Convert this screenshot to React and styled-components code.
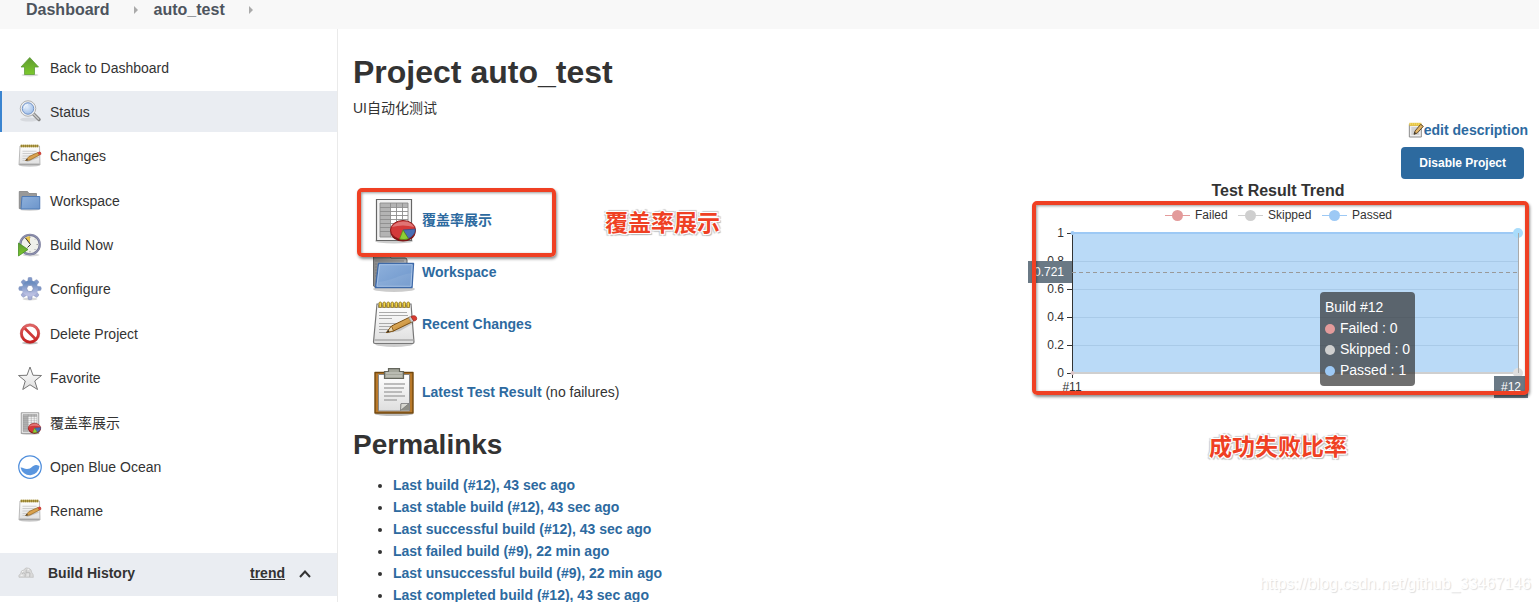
import React from 'react';
import styled, { createGlobalStyle } from 'styled-components';

const GlobalStyle = createGlobalStyle`
* {
  box-sizing: border-box;
}
body {
  margin: 0;
  background-color: #fff;
  color: #333;
  font-family: "Liberation Sans", "Noto Sans CJK SC", sans-serif;
  font-size: 14px;
  line-height: 22px;
}
ul, h1, h2, p {
  margin: 0;
  padding: 0;
}
svg {
  display: block;
  flex: none;
}
`;

const Page = styled.div`
position: relative;
display: flex;
flex-direction: column;
height: 100vh;
overflow: hidden;
`;

const Breadcrumbs = styled.nav`
display: flex;
align-items: center;
gap: 16px;
padding: 0 26px 10px;
background-color: #f8f8f8;
`;

const Crumb = styled.a`
color: #4d545d;
font-size: 16px;
font-weight: 700;
line-height: 19px;
text-decoration: none;
`;

const CrumbArrow = styled.span`
width: 4px;
margin-left: 8px;
border: 4px solid transparent;
border-left-color: #aaa;
border-right: none;
`;

const Body = styled.div`
display: flex;
flex: 1;
min-height: 0;
`;

const Sidebar = styled.aside`
display: flex;
flex: none;
flex-direction: column;
gap: 21px;
width: 338px;
padding-top: 18px;
border-right: 1px solid #eaeaea;
`;

const TaskList = styled.ul`
display: flex;
flex-direction: column;
justify-content: space-between;
height: 485px;
list-style: none;
`;

const Task = styled.a`
display: flex;
align-items: center;
gap: 8px;
height: 41px;
padding-left: ${(p) => (p.$active ? 16 : 18)}px;
border-left: ${(p) => (p.$active ? '2px solid #3a84d0' : 'none')};
background-color: ${(p) => (p.$active ? '#eaedf2' : 'transparent')};
color: #333;
text-decoration: none;
`;

const HistoryBar = styled.div`
display: flex;
align-items: center;
gap: 14px;
height: 43px;
padding: 0 26px 4px 18px;
background-color: #eaedf2;
font-weight: 700;
`;

const HistoryTitle = styled.span`
flex: 1;
`;

const TrendLink = styled.a`
color: #333;
`;

const Toggle = styled.button`
padding: 0;
border: none;
background: none;
color: #333;
cursor: pointer;
`;

const Main = styled.main`
flex: 1;
min-width: 0;
padding: 25px 11px 0 15px;
`;

const Title = styled.h1`
font-size: 32px;
line-height: 36px;
`;

const Description = styled.p`
margin-top: 7px;
`;

const Actions = styled.div`
display: flex;
flex-direction: column;
align-items: flex-end;
gap: 6px;
`;

const EditLink = styled.a`
display: flex;
align-items: center;
color: #2d6a9f;
font-weight: 700;
text-decoration: none;
`;

const DisableButton = styled.button`
height: 32px;
margin-right: 4px;
padding: 0 18px;
border: none;
border-radius: 4px;
background-color: #2d6a9f;
color: #fff;
font-family: inherit;
font-size: 12px;
font-weight: 700;
cursor: pointer;
`;

const Columns = styled.div`
display: flex;
justify-content: space-between;
`;

const Shortcuts = styled.div`
display: flex;
flex-direction: column;
gap: 4px;
padding: 17px 0 0 17px;
`;

const Shortcut = styled.div`
position: relative;
display: flex;
align-items: center;
gap: 4px;
margin-top: ${(p) => (p.$spaced ? 16 : 0)}px;
`;

const Link = styled.a`
color: #2d6a9f;
font-weight: 700;
text-decoration: none;
`;

const Heading = styled.h2`
margin-top: 12px;
font-size: 28px;
line-height: 34px;
`;

const Permalinks = styled.ul`
margin-top: 12px;
padding-left: 40px;
`;

// red marker drawn above the content
const Marker = styled.span`
position: absolute;
top: -8px;
left: -13px;
z-index: 2;
width: 199px;
height: 69px;
border: 4px solid #ef4023;
border-radius: 5px;
box-shadow: 1px 2px 3px rgba(0, 0, 0, .45), inset 1px 1px 3px rgba(0, 0, 0, .4);
pointer-events: none;
`;

const ChartMarker = styled(Marker)`
top: 1px;
left: 4px;
width: 497px;
height: 194px;
`;

const Note = styled.strong`
color: #ef4023;
font-size: 23px;
line-height: 30px;
text-shadow: 0 0 1px #fff, 1px 1px 0 #fff, -1px -1px 0 #fff, 1px -1px 0 #fff, -1px 1px 0 #fff,
  2px 2px 1px #bbb, -2px -1px 1px #ccc, 2px -2px 1px #ccc, -2px 2px 1px #ccc;
`;

const SideNote = styled(Note)`
position: absolute;
top: 12px;
left: 235px;
white-space: nowrap;
`;

const Trend = styled.section`
display: flex;
flex: none;
flex-direction: column;
align-items: center;
width: 500px;
padding-top: 3px;
`;

const TrendTitle = styled.div`
font-size: 16px;
font-weight: 700;
line-height: 18px;
`;

const ChartBox = styled.div`
position: relative;
width: 500px;
height: 200px;
margin-bottom: 32px;
`;

const Tooltip = styled.div`
position: absolute;
top: 92px;
left: 292px;
padding: 5px;
border-radius: 4px;
background-color: rgba(50, 50, 50, .7);
color: #fff;
line-height: 21px;
white-space: nowrap;
`;

const TooltipRow = styled.div`
display: flex;
align-items: center;
gap: 5px;
`;

const Dot = styled.span`
width: 10px;
height: 10px;
border-radius: 50%;
background-color: ${(p) => p.$color};
`;

const Watermark = styled.span`
position: absolute;
right: 8px;
bottom: 8px;
color: #fff;
font-size: 16px;
line-height: 20px;
text-shadow: 1px 1px 1px #ddd;
`;

const HiddenSvg = styled.svg`
position: absolute;
`;

const Svg = ({ size = 24, children }) => (
  <svg width={size} height={size} viewBox="0 0 48 48" fill="none" aria-hidden="true">
    {children}
  </svg>
);

const Gradients = () => (
  <HiddenSvg width="0" height="0" aria-hidden="true">
    <defs>
      <linearGradient id="paper" x1="0" y1="0" x2="0" y2="1">
        <stop offset="0" stopColor="#fff" />
        <stop offset="1" stopColor="#dedede" />
      </linearGradient>
      <linearGradient id="green" x1="0" y1="0" x2="0" y2="1">
        <stop offset="0" stopColor="#5f9a31" />
        <stop offset="1" stopColor="#7cc92c" />
      </linearGradient>
      <linearGradient id="blue" x1="0" y1="0" x2="1" y2="1">
        <stop offset="0" stopColor="#8fb1dc" />
        <stop offset="1" stopColor="#6c95cb" />
      </linearGradient>
      <linearGradient id="gearFill" x1="0" y1="0" x2="0" y2="1">
        <stop offset="0" stopColor="#6b8cbf" />
        <stop offset="1" stopColor="#b9bfe2" />
      </linearGradient>
      <linearGradient id="redFill" x1="0" y1="0" x2="0" y2="1">
        <stop offset="0" stopColor="#e06666" />
        <stop offset="1" stopColor="#c62020" />
      </linearGradient>
      <linearGradient id="metal" x1="0" y1="0" x2="1" y2="0">
        <stop offset="0" stopColor="#8a8a8a" />
        <stop offset="1" stopColor="#b5b5b5" />
      </linearGradient>
      <linearGradient id="wood" x1="0" y1="0" x2="1" y2="1">
        <stop offset="0" stopColor="#f0c67a" />
        <stop offset="1" stopColor="#b97a22" />
      </linearGradient>
      <radialGradient id="lens" cx=".4" cy=".35" r=".7">
        <stop offset="0" stopColor="#e4eefb" />
        <stop offset="1" stopColor="#9dbde8" />
      </radialGradient>
    </defs>
  </HiddenSvg>
);

const UpIcon = ({ size }) => (
  <Svg size={size}>
    <ellipse cx="24" cy="38" rx="17" ry="3" fill="#000" opacity=".15" />
    <path d="M23.5 3 41 22H33V37H13V22H6Z" fill="url(#green)" stroke="#5b9a35" strokeWidth="1.5" />
  </Svg>
);

const SearchIcon = ({ size }) => (
  <Svg size={size}>
    <ellipse cx="22" cy="39" rx="18" ry="4" fill="#000" opacity=".08" />
    <path d="M31 28 42 39" stroke="#858585" strokeWidth="7" strokeLinecap="round" />
    <path d="M31 28 41 38" stroke="#c9c9c9" strokeWidth="3" strokeLinecap="round" />
    <circle cx="20" cy="17" r="15.500" fill="#f3f3f3" stroke="#b0b0b0" strokeWidth="2" />
    <circle cx="20" cy="17" r="11.500" fill="url(#lens)" stroke="#7193c8" strokeWidth="2" />
    <path d="M12 17a8 8 0 0 1 8-8" stroke="#fff" strokeWidth="2" opacity=".7" />
  </Svg>
);

const NotepadIcon = ({ size }) => (
  <Svg size={size}>
    <ellipse cx="24" cy="44" rx="19" ry="3" fill="#000" opacity=".2" />
    <path d="M7 4H41L44 42Q44 43.500 42.500 43.500H5Q3.500 43.500 3.500 42Z" fill="url(#paper)" stroke="#777" strokeWidth="1.200" />
    <path d="M4.500 40H43.500" stroke="#aaa" strokeWidth="1.500" />
    <path d="M8 5H40V8H8Z" fill="#a29a86" />
    {[9, 13, 17, 21, 25, 29, 33, 37].map((x) => (
      <rect key={x} x={x} y="2" width="2.500" height="5.500" rx="1.200" fill="#f1d44b" stroke="#8f7216" strokeWidth=".8" />
    ))}
    <path d="M9 12.500H37M9 15.500H38M9 18.500H22M9 23.500H34M9 26.500H30M9 29.500H24M9 32.500H18" stroke="#aaa" />
    <path d="M16 33.500 30 31 44 23 41 20Z" fill="#000" opacity=".15" />
    <path d="M16.500 32.500 21.500 26 40 17 43 21.500 23.500 31Z" fill="url(#wood)" stroke="#7b4f13" />
    <path d="M16.500 32.500 21.500 26 23.500 31Z" fill="#ead7ae" stroke="#7b4f13" strokeWidth=".8" />
    <path d="M16.500 32.500 18.500 30 19.300 31.700Z" fill="#222" />
    <path d="M38.500 17.700 41 16.500 43.800 21 41.400 22.300Z" fill="#ccc" stroke="#888" strokeWidth=".6" />
    <path d="M41 16.500Q45.500 14.500 46.500 17.500T43.800 21Z" fill="#dc3b30" stroke="#a12a22" strokeWidth=".8" />
  </Svg>
);

// simpler drawing that stays readable at 24px
const SmallNotepadIcon = ({ size }) => (
  <Svg size={size}>
    <ellipse cx="23" cy="43" rx="19" ry="3" fill="#000" opacity=".15" />
    <path d="M4 4H43L44 42H2Z" fill="url(#paper)" stroke="#a5a5a5" strokeWidth="1.500" />
    <path d="M3 40.500H43" stroke="#a0a0a0" strokeWidth="2.500" />
    <path d="M5 4H41" stroke="#b8a452" strokeWidth="5" />
    <path d="M6 4H41" stroke="#8a7628" strokeWidth="5" strokeDasharray="1.500 2.500" />
    <path d="M9 14.500H37M9 19H34M9 24H28M9 29H20M9 33H18" stroke="#c2c2c2" strokeWidth="1.500" />
    <path d="M17 35 41 26" stroke="#000" strokeWidth="3" opacity=".15" />
    <path d="M15 33 22 25 40 17 43 22 24 32Z" fill="#d9a14d" stroke="#94651f" strokeWidth="1.500" />
    <path d="M15 33 18 29.500 20 32.500Z" fill="#333" />
    <path d="M40 17Q45 14 46 18T43 22Z" fill="#e0463b" stroke="#b53a30" />
  </Svg>
);

const EditIcon = () => (
  <Svg size={16}>
    <path d="M4 7H40V45H4Z" fill="#eee" stroke="#8c8c8c" strokeWidth="3" />
    <path d="M4 7H40" stroke="#dfb92c" strokeWidth="9" />
    <path d="M5 6H40" stroke="#fff09a" strokeWidth="5" strokeDasharray="3 3" />
    <path d="M10 18H32M10 24H28M10 30H18M10 36H34" stroke="#aaa" strokeWidth="2.500" />
    <path d="M18 37 21 27 38 7 46 13 28 33Z" fill="#e3b566" stroke="#5f4a2b" strokeWidth="3" />
    <path d="M18 37 20 30 25 34Z" fill="#333" />
  </Svg>
);

const FolderIcon = ({ size }) => (
  <Svg size={size}>
    <ellipse cx="24" cy="41" rx="21" ry="3" fill="#000" opacity=".2" />
    <path d="M3.500 38V7Q3.500 5.500 5 5.500H18L21 10H35Q37 10 37 12V20H8L6 40Z" fill="url(#metal)" stroke="#666" />
    <path d="M5 13H34M5 16H7M5 19H7M5 22H7M5 25H7M5 28H6" stroke="#777" strokeWidth=".8" />
    <path d="M8.500 15.500H43.500L42 39.500H5.500Z" fill="url(#blue)" stroke="#3f6aa8" strokeWidth="1.400" strokeLinejoin="round" />
    <path d="M9.500 16.700H42.200L41 38.300H7Z" stroke="#b0c9ea" strokeWidth=".8" />
    <path d="M8.500 34C22 33 30 26 42 25L41 38H8Z" fill="#fff" opacity=".08" />
  </Svg>
);

const SmallFolderIcon = ({ size }) => (
  <Svg size={size}>
    <ellipse cx="23" cy="41" rx="20" ry="3" fill="#000" opacity=".15" />
    <path d="M2.500 39V5H19L22 9H37V18H8V39Z" fill="#999" stroke="#7d7d7d" strokeWidth="1.500" />
    <path d="M8 15H43.500V40H6Z" fill="url(#blue)" stroke="#4f7ab5" strokeWidth="2" strokeLinejoin="round" />
  </Svg>
);

const BuildIcon = ({ size }) => (
  <Svg size={size}>
    <ellipse cx="26" cy="44" rx="17" ry="3" fill="#000" opacity=".15" />
    <circle cx="24" cy="23" r="19.500" fill="#f0f0ea" stroke="#777a99" strokeWidth="4.500" />
    <circle cx="24" cy="23" r="20" stroke="#aeb1cb" strokeWidth="1" />
    <path d="M24 22 14 10Q19 6 24 6.500Z" fill="#eac64b" />
    <path d="M15 10 25 23 19 29" stroke="#333" strokeWidth="2" />
    <path d="M24 7v3M24 36v3M37 23h3M34 13l2-2M33 32l2 2" stroke="#888" strokeWidth="1.500" />
    <path d="M1 20 20 33 1 46Z" fill="url(#green)" stroke="#3f8a1e" strokeWidth="1.500" />
  </Svg>
);

const GearIcon = ({ size }) => (
  <Svg size={size}>
    <ellipse cx="24" cy="44" rx="15" ry="3" fill="#000" opacity=".15" />
    {[0, 45, 90, 135, 180, 225, 270, 315].map((a) => (
      <path key={a} d="M19 12 20.500 1.500Q24 -.5 27.500 1.500L29 12Z" fill={a > 90 && a < 270 ? '#a6aed6' : '#8099c8'} stroke="#7f8fba" transform={`rotate(${a} 24 23)`} />
    ))}
    <circle cx="24" cy="23" r="11" stroke="url(#gearFill)" strokeWidth="10" />
    <circle cx="24" cy="23" r="6.500" fill="#fff" stroke="#7383b0" strokeWidth="1.500" />
  </Svg>
);

const DeleteIcon = ({ size }) => (
  <Svg size={size}>
    <ellipse cx="24" cy="42" rx="16" ry="3" fill="#000" opacity=".25" />
    <path d="M12 11 36 35" stroke="#cf3a3a" strokeWidth="5.500" />
    <circle cx="24" cy="23" r="17" stroke="url(#redFill)" strokeWidth="5.500" />
    <circle cx="24" cy="23" r="19.500" stroke="#b22a2a" strokeWidth=".8" />
  </Svg>
);

const StarIcon = ({ size }) => (
  <Svg size={size}>
    <path d="M24 2 30 18.500 47 19 33.500 30 39 47 24 37.500 9.500 47 14.500 30 1 19 18 18.500Z" fill="url(#paper)" stroke="#777" strokeWidth="2" strokeLinejoin="round" />
  </Svg>
);

const ReportIcon = ({ size }) => (
  <Svg size={size}>
    <ellipse cx="24" cy="45" rx="19" ry="2.500" fill="#000" opacity=".2" />
    <path d="M6.500 3.500H41.500V44.500H6.500Z" fill="#f2f2f2" stroke="#666" strokeWidth="1.200" />
    <path d="M10 7H38V41H10Z" fill="#fff" />
    <path d="M10 7H38V11H20V41H10Z" fill="#b4b4b4" />
    <path d="M10 11.500H38M10 15.500H38M10 19.500H38M10 23.500H38M10 27.500H38M10 31.500H38M10 35.500H38M10 41H38M10 7V41M20.500 7V41M26.500 7V41M32.500 7V41M38 7V41M10 7H38" stroke="#8d8d8d" strokeWidth=".9" />
    <ellipse cx="33" cy="36" rx="12.500" ry="9.500" fill="#7d1616" />
    <ellipse cx="33" cy="34" rx="12.500" ry="9.500" fill="#d33a3a" stroke="#8f1b1b" />
    <path d="M22 31Q25 26 33 25.500T44 31Q33 28 22 31Z" fill="#fff" opacity=".3" />
    <path d="M33 34 45.300 33Q45.500 39 38.500 42.500Z" fill="#4a6fb5" stroke="#2f4d85" strokeWidth=".7" />
    <path d="M33 34 38.500 42.700Q34 44.300 29.500 43Z" fill="#8ccf35" stroke="#4f8d19" strokeWidth=".7" />
  </Svg>
);

const OceanIcon = ({ size }) => (
  <Svg size={size}>
    <circle cx="24" cy="24" r="22.500" fill="#fff" stroke="#4f8edc" strokeWidth="2.500" />
    <path d="M5 25C9 24 12 28 18 28 28 28 29 19 37 20 40 20 41 22 43 22A19.200 19.200 0 0 1 5 25Z" fill="#5a96df" />
  </Svg>
);

const ClipboardIcon = ({ size }) => (
  <Svg size={size}>
    <ellipse cx="24" cy="46" rx="19" ry="2" fill="#000" opacity=".25" />
    <path d="M5 4.500H43V45H5Z" fill="#b9792a" stroke="#71480f" strokeWidth="1.400" strokeLinejoin="round" />
    <path d="M8.500 6.500H39.500V43H8.500Z" fill="url(#paper)" stroke="#888" />
    <path d="M30.500 42.500V36H39V42.500Z" fill="#8e8e86" />
    <path d="M30.500 42.500 31 35.500 39 35.500Z" fill="#d7d7d0" stroke="#777" strokeWidth=".8" />
    <path d="M18.500 3.500V.700H29.500V3.500H33.500V10.500H14.500V3.500Z" fill="#a5a79c" stroke="#64665d" strokeWidth="1.200" />
    <path d="M16 5H32M16 8H32" stroke="#cfd0c8" />
    <path d="M14 16H35M14 20H34M14 24H32M14 28H35M14 32H27" stroke="#a9a9a9" strokeWidth="1.500" />
  </Svg>
);

const WeatherIcon = () => (
  <Svg size={16}>
    <path d="M3 37Q0 30 8 26 8 16 17 15 23 5 33 10 41 13 41 22 47 28 46 37Z" fill="#dadada" stroke="#bdbdbd" strokeWidth="2" />
    <path d="M12 26Q17 21 22 26L21 36M25 14 24 24M24 24Q30 19 36 24L35 36" stroke="#adadad" strokeWidth="2" />
    <path d="M12 20 16 19M29 13H33M8 31H14M28 30H32" stroke="#f5f5f5" strokeWidth="3" />
  </Svg>
);

const ChevronUp = () => (
  <svg width="12" height="12" viewBox="0 0 12 12" fill="none" aria-hidden="true">
    <path d="M1 10 6 4.500 11 10" stroke="#333" strokeWidth="2" />
  </svg>
);

const tasks = [
  { name: 'Back to Dashboard', Icon: UpIcon },
  { name: 'Status', Icon: SearchIcon, active: true },
  { name: 'Changes', Icon: SmallNotepadIcon },
  { name: 'Workspace', Icon: SmallFolderIcon },
  { name: 'Build Now', Icon: BuildIcon },
  { name: 'Configure', Icon: GearIcon },
  { name: 'Delete Project', Icon: DeleteIcon },
  { name: 'Favorite', Icon: StarIcon },
  { name: '覆盖率展示', Icon: ReportIcon },
  { name: 'Open Blue Ocean', Icon: OceanIcon },
  { name: 'Rename', Icon: SmallNotepadIcon },
];

const permalinks = [
  'Last build (#12), 43 sec ago',
  'Last stable build (#12), 43 sec ago',
  'Last successful build (#12), 43 sec ago',
  'Last failed build (#9), 22 min ago',
  'Last unsuccessful build (#9), 22 min ago',
  'Last completed build (#12), 43 sec ago',
];

const series = [
  { name: 'Failed', value: 0, color: '#e39b9b', x: 137 },
  { name: 'Skipped', value: 0, color: '#cfcfcf', x: 210 },
  { name: 'Passed', value: 1, color: '#9dc9f5', x: 294 },
];

const ticks = [0, 0.2, 0.4, 0.6, 0.8, 1];
const yOf = (value) => 173 - value * 140;

const TrendChart = () => (
  <svg width="500" height="200" viewBox="0 0 500 200" fontSize="12" fill="#333" role="img" aria-label="Test Result Trend">
    {series.map((s) => (
      <g key={s.name}>
        <path d={`M${s.x} 15.500h25`} stroke={s.color} />
        <circle cx={s.x + 12.5} cy="15.500" r="5.500" fill={s.color} />
        <text x={s.x + 30} y="19">{s.name}</text>
      </g>
    ))}
    <rect x="44" y="33" width="447" height="140" fill="#badaf7" />
    {ticks.map((t) => (
      <g key={t}>
        {t > 0 && t < 1 && <path d={`M44 ${yOf(t) + 0.5}H490`} stroke="#a9cae8" />}
        <path d={`M39 ${yOf(t) + 0.5}h5`} stroke="#333" />
        <text x="36" y={yOf(t) + 4} textAnchor="end">{t}</text>
      </g>
    ))}
    <path d="M44.500 33V178" stroke="#333" />
    <path d="M44 173H490" stroke="#cfcfcf" strokeWidth="2" />
    <path d="M44 33H490" stroke="#9dc9f5" strokeWidth="2" />
    <circle cx="44.500" cy="33" r="2" fill="#9dc9f5" />
    <circle cx="44.500" cy="173" r="2" fill="#dcc6c9" />
    <circle cx="490" cy="33" r="5" fill="#a9dcfb" />
    <circle cx="490" cy="173" r="5" fill="#dedede" />
    <path d="M490.500 33V173" stroke="#aaa" />
    <path d="M44 72.500H490" stroke="#999" strokeDasharray="4 3" />
    <text x="44" y="191" textAnchor="middle">#11</text>
    <rect x="0" y="61" width="44" height="22" fill="#6a7985" />
    <text x="36" y="76" textAnchor="end" fill="#fff">0.721</text>
    <rect x="466" y="176" width="34" height="22" fill="#6a7985" />
    <text x="483" y="191" textAnchor="middle" fill="#fff">#12</text>
  </svg>
);

const App = () => (
  <Page>
    <GlobalStyle />
    <Gradients />
    <Breadcrumbs>
      <Crumb href="#dashboard">Dashboard</Crumb>
      <CrumbArrow />
      <Crumb href="#auto_test">auto_test</Crumb>
      <CrumbArrow />
    </Breadcrumbs>
    <Body>
      <Sidebar>
        <TaskList>
          {tasks.map(({ name, Icon, active }) => (
            <li key={name}>
              <Task href="#task" $active={active}>
                <Icon size={24} />
                {name}
              </Task>
            </li>
          ))}
        </TaskList>
        <HistoryBar>
          <WeatherIcon />
          <HistoryTitle>Build History</HistoryTitle>
          <TrendLink href="#trend">trend</TrendLink>
          <Toggle type="button" aria-label="Collapse build history">
            <ChevronUp />
          </Toggle>
        </HistoryBar>
      </Sidebar>
      <Main>
        <Title>Project auto_test</Title>
        <Description>UI自动化测试</Description>
        <Actions>
          <EditLink href="#edit">
            <EditIcon />
            edit description
          </EditLink>
          <DisableButton type="button">Disable Project</DisableButton>
        </Actions>
        <Columns>
          <div>
            <Shortcuts>
              <Shortcut>
                <ReportIcon size={48} />
                <Link href="#coverage">覆盖率展示</Link>
                <Marker />
                <SideNote>覆盖率展示</SideNote>
              </Shortcut>
              <Shortcut>
                <FolderIcon size={48} />
                <Link href="#workspace">Workspace</Link>
              </Shortcut>
              <Shortcut>
                <NotepadIcon size={48} />
                <Link href="#changes">Recent Changes</Link>
              </Shortcut>
              <Shortcut $spaced>
                <ClipboardIcon size={48} />
                <span>
                  <Link href="#result">Latest Test Result</Link> (no failures)
                </span>
              </Shortcut>
            </Shortcuts>
            <Heading>Permalinks</Heading>
            <Permalinks>
              {permalinks.map((text) => (
                <li key={text}>
                  <Link href="#build">{text}</Link>
                </li>
              ))}
            </Permalinks>
          </div>
          <Trend>
            <TrendTitle>Test Result Trend</TrendTitle>
            <ChartBox>
              <TrendChart />
              <Tooltip>
                Build #12
                {series.map((s) => (
                  <TooltipRow key={s.name}>
                    <Dot $color={s.color} />
                    {s.name} : {s.value}
                  </TooltipRow>
                ))}
              </Tooltip>
              <ChartMarker />
            </ChartBox>
            <Note>成功失败比率</Note>
          </Trend>
        </Columns>
      </Main>
    </Body>
    <Watermark>https://blog.csdn.net/github_33467146</Watermark>
  </Page>
);

export default App;
